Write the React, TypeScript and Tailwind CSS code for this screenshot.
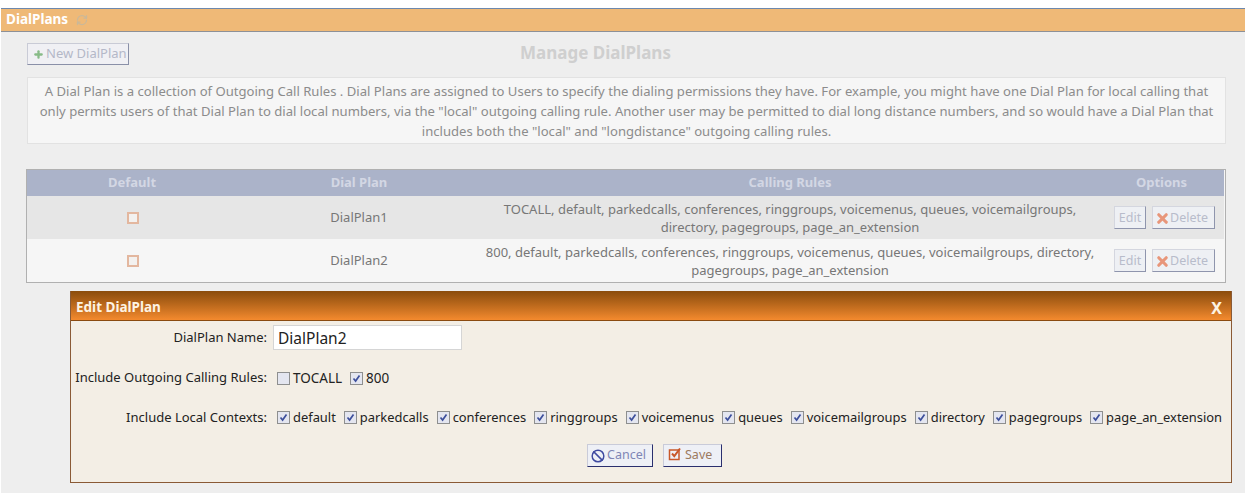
import { Ban, Plus, RefreshCw, X } from 'lucide-react';

const rows = [
  {
    name: 'DialPlan1',
    rules: 'TOCALL, default, parkedcalls, conferences, ringgroups, voicemenus, queues, voicemailgroups, directory, pagegroups, page_an_extension',
    shade: 'bg-[#e6e6e6]',
    text: 'max-w-[590px]',
  },
  {
    name: 'DialPlan2',
    rules: '800, default, parkedcalls, conferences, ringgroups, voicemenus, queues, voicemailgroups, directory, pagegroups, page_an_extension',
    shade: 'bg-[#f6f6f6]',
    text: 'max-w-[612px]',
  },
];

const contexts = [
  'default',
  'parkedcalls',
  'conferences',
  'ringgroups',
  'voicemenus',
  'queues',
  'voicemailgroups',
  'directory',
  'pagegroups',
  'page_an_extension',
];

function Check({ label, checked = true }: { label: string; checked?: boolean }) {
  return (
    <span className="flex shrink-0 items-center gap-[3px]">
      <span className="flex h-[13px] w-[13px] items-center justify-center border border-[#8e8f8f] bg-[#e4e6f0]">
        {checked && (
          <svg viewBox="0 0 11 11" className="h-[11px] w-[11px]">
            <path d="M2.5 5.5 L4.6 8 L8.5 2.5" fill="none" stroke="#3d4f9c" strokeWidth="1.7" />
          </svg>
        )}
      </span>
      <span>{label}</span>
    </span>
  );
}

export default function App() {
  return (
    <div className="h-[493px] w-[1245px] overflow-hidden bg-white pt-2 pl-px font-['Noto_Sans',sans-serif] text-[13px] text-[#333]">
      <div className="h-[485px] bg-[#eeeeee]">
        {/* page header */}
        <div className="flex h-6 items-center gap-[8px] border-t border-b border-t-[#6d88ad] border-b-[#8d9097] bg-[#efb977] pl-[5px] text-[13.5px] leading-none font-bold text-white">
          DialPlans
          <RefreshCw className="h-3 w-3 text-[#c9b89a]" strokeWidth={2.5} />
        </div>

        {/* faded content under the dialog */}
        <div className="pt-[11px] pr-[19px] pl-[26px]">
          <div className="relative flex h-[22px] items-center justify-center">
            <button className="absolute top-0 left-0 flex h-[22px] w-[102px] items-center gap-[2px] border border-[#c9cbd6] border-r-[#8a90a8] border-b-[#8a90a8] bg-[#f0f0f4] pl-[5px] text-[13px] text-[#b4b8c8]">
              <Plus className="h-[11px] w-[11px] text-[#88bb88]" strokeWidth={5} />
              New DialPlan
            </button>
            <h1 className="pr-[62px] pb-[2px] text-[17px] font-bold text-[#cfcfcf]">Manage DialPlans</h1>
          </div>

          <p className="mt-3 h-[67px] border border-[#e2e2e2] bg-[#f6f6f6] px-2 pt-[3px] text-center text-[13.1px] leading-5 text-[#8c8c8c]">
            A Dial Plan is a collection of Outgoing Call Rules . Dial Plans are assigned to Users to specify the dialing permissions they have. For example, you might have one Dial Plan for local calling that only permits users of that Dial Plan to dial local numbers, via the "local" outgoing calling rule. Another user may be permitted to dial long distance numbers, and so would have a Dial Plan that includes both the "local" and "longdistance" outgoing calling rules.
          </p>

          <div className="mt-[25px] -ml-px w-[1200px] border border-[#b0b0b0] bg-[#f6f6f6] pr-px">
            <div className="grid h-[26px] grid-cols-[210px_244px_618px_125px] items-center bg-[#abb3c9] text-center text-[13px] font-bold text-[#d3d7e4]">
              <div>Default</div>
              <div>Dial Plan</div>
              <div>Calling Rules</div>
              <div>Options</div>
            </div>
            {rows.map((row) => (
              <div key={row.name} className={`grid h-[43px] grid-cols-[210px_244px_618px_125px] items-center text-center text-[#777] ${row.shade}`}>
                <div className="flex justify-center pl-px">
                  <span className="h-3 w-3 border-2 border-[#e3b79f] bg-[#f3f1ef]" />
                </div>
                <div>{row.name}</div>
                <div className={`mx-auto leading-[18px] ${row.text}`}>{row.rules}</div>
                <div className="flex gap-[6px] pl-[15px] text-[12.5px] text-[#b8bccb]">
                  <button className="h-[23px] w-8 border border-[#d4d6df] border-r-[#8f95ad] border-b-[#8f95ad] bg-[#eef0f4] pt-px">Edit</button>
                  <button className="flex h-[23px] w-[63px] items-center gap-0 border border-[#d4d6df] border-r-[#8f95ad] border-b-[#8f95ad] bg-[#eef0f4] pt-px pl-[2px]">
                    <X className="h-[15px] w-[15px] text-[#e8967a]" strokeWidth={5} />
                    Delete
                  </button>
                </div>
              </div>
            ))}
          </div>
        </div>

        {/* edit dialog */}
        <div className="mt-2 ml-[69px] h-[192px] w-[1162px] border-r border-b border-l border-[#8a5a36] bg-[#f3eee5] text-[#222]">
          <div className="flex h-[30px] items-center justify-between border-b border-[#8a4a10] bg-gradient-to-b from-[#8a4c0c] to-[#f48a2e] pt-1 pr-[9px] pl-[5px] text-[13.5px] font-bold text-[#fdf3e3]">
            <span>Edit DialPlan</span>
            <span className="text-base">X</span>
          </div>

          <div className="flex items-center pt-[4px]">
            <label className="w-[196px] shrink-0 text-right">DialPlan Name:</label>
            <input
              readOnly
              value="DialPlan2"
              className="ml-[6px] h-[25px] w-[189px] border border-[#d5d5d5] bg-white px-1 text-[15.5px] text-[#222]"
            />
          </div>

          <div className="mt-[18px] flex h-5 items-center">
            <label className="w-[196px] shrink-0 text-right">Include Outgoing Calling Rules:</label>
            <div className="ml-[10px] flex gap-2 text-[13.5px]">
              <Check label="TOCALL" checked={false} />
              <Check label="800" />
            </div>
          </div>

          <div className="mt-[20px] flex h-5 items-center">
            <label className="w-[196px] shrink-0 text-right">Include Local Contexts:</label>
            <div className="ml-[10px] flex gap-2 text-[12.9px]">
              {contexts.map((c) => (
                <Check key={c} label={c} />
              ))}
            </div>
          </div>

          <div className="mt-4 flex gap-[10px] pl-[516px] text-[12.5px]">
            <button className="flex h-[23px] w-[66px] items-center gap-[2px] border border-[#c9cbd9] border-r-[#2a2f6e] border-b-[#2a2f6e] bg-[#eef0f6] pl-[3px] text-[#7f86b5]">
              <Ban className="h-[14px] w-[14px] text-[#3f4aa0]" strokeWidth={2.5} />
              Cancel
            </button>
            <button className="flex h-[23px] w-[59px] items-center gap-[3px] border border-[#c9cbd9] border-r-[#2a2f6e] border-b-[#2a2f6e] bg-[#eef0f6] pl-1 text-[#9c7a60]">
              <svg viewBox="0 0 14 14" className="mb-1 h-[14px] w-[14px]">
                <rect x="1.5" y="3" width="9.5" height="9.5" fill="none" stroke="#c9582a" strokeWidth="1.5" />
                <path d="M4 6.5 L6.3 9.2 L12 1.5" fill="none" stroke="#c9582a" strokeWidth="2" />
              </svg>
              Save
            </button>
          </div>
        </div>
      </div>
    </div>
  );
}
